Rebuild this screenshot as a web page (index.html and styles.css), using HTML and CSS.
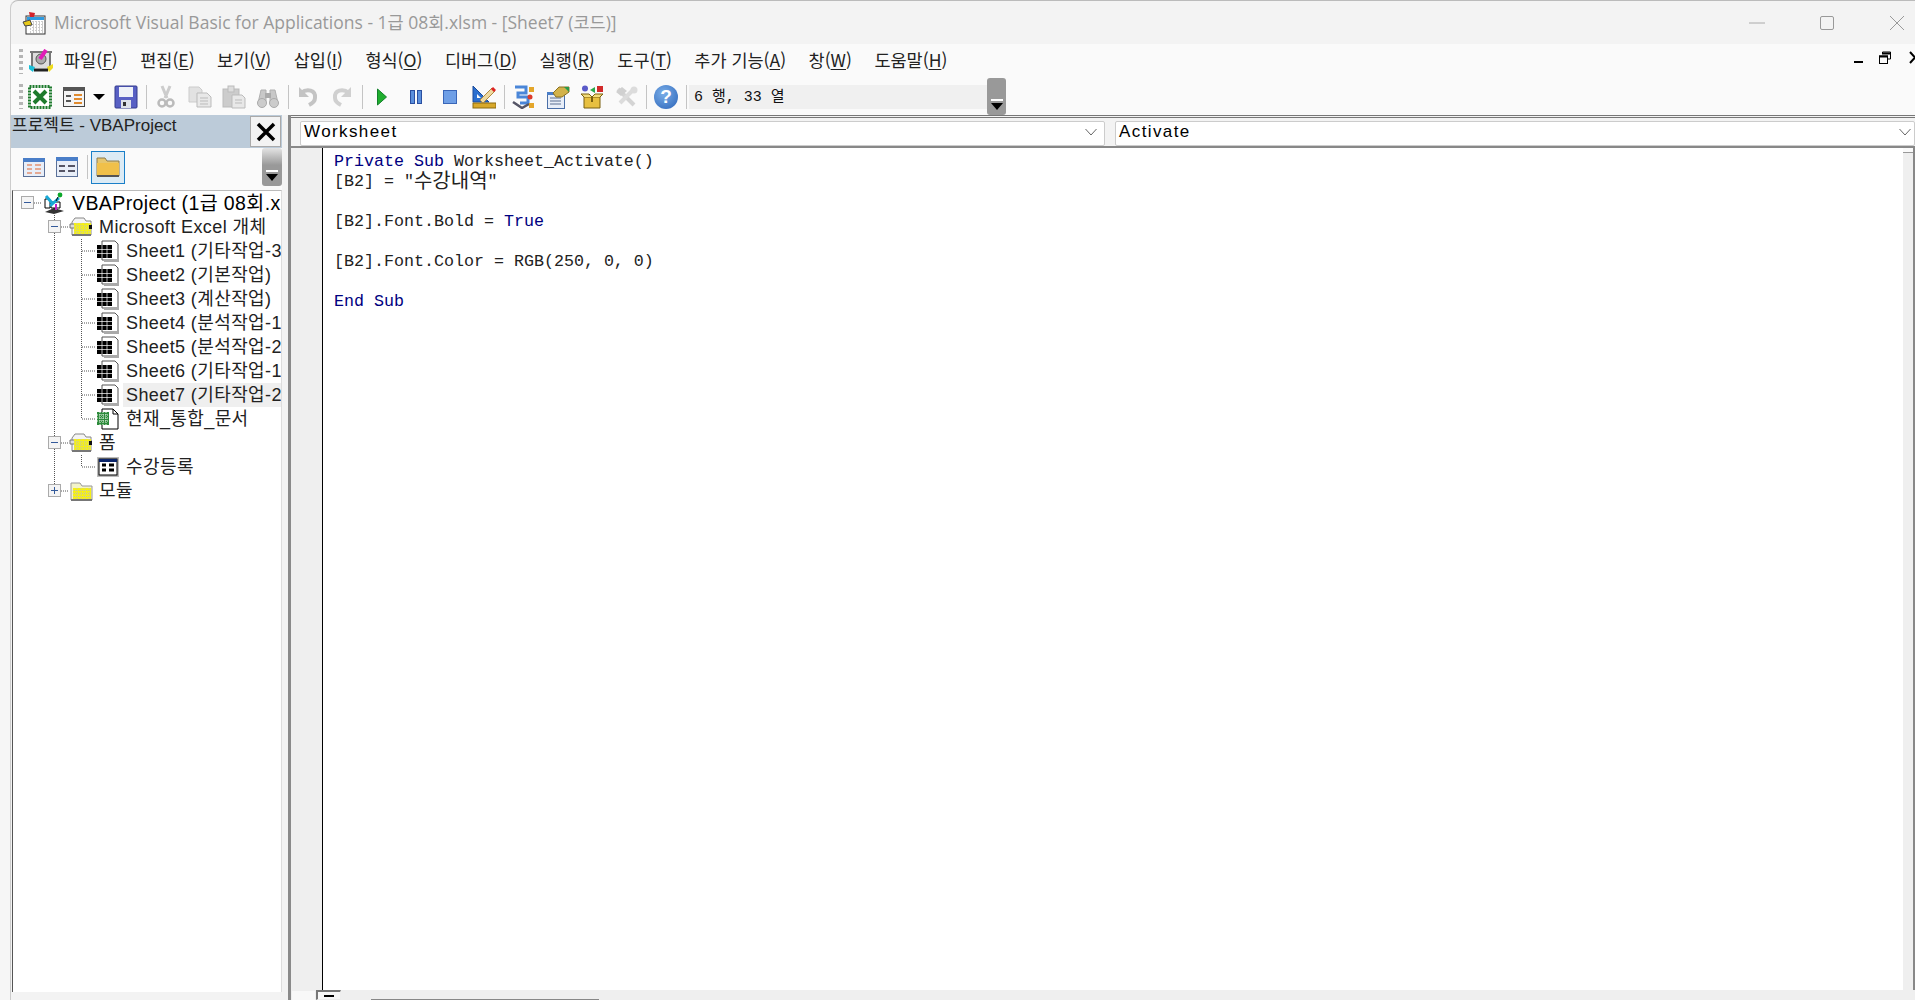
FILE: index.html
```html
<!DOCTYPE html>
<html lang="ko">
<head>
    <meta charset="UTF-8">
    <title>Microsoft Visual Basic for Applications</title>
    <link rel="stylesheet" href="styles.css">
</head>
<body>
<svg class="defs" width="0" height="0">
    <symbol id="t-branch" viewBox="0 0 27 24"><path d="M13.5 0V24M14 12H27" fill="none" stroke="#555" stroke-dasharray="1 1"/></symbol>
    <symbol id="l-branch" viewBox="0 0 27 24"><path d="M13.5 0V12M14 12H27" fill="none" stroke="#555" stroke-dasharray="1 1"/></symbol>
    <symbol id="v-line" viewBox="0 0 27 24"><path d="M13.5 0V24" fill="none" stroke="#555" stroke-dasharray="1 1"/></symbol>
    <symbol id="box-minus" viewBox="0 0 27 24"><path d="M13.5 0V24M20 12H27" fill="none" stroke="#555" stroke-dasharray="1 1"/><rect x="7.5" y="5.5" width="12" height="12" fill="#f4f4f4" stroke="#aaa"/><path d="M10 11.5H17" stroke="#345a9a"/></symbol>
    <symbol id="box-minus-end" viewBox="0 0 27 24"><path d="M20 12H27" fill="none" stroke="#555" stroke-dasharray="1 1"/><rect x="7.5" y="5.5" width="12" height="12" fill="#f4f4f4" stroke="#aaa"/><path d="M10 11.5H17" stroke="#345a9a"/></symbol>
    <symbol id="box-plus" viewBox="0 0 27 24"><path d="M13.5 0V6M20 12H27" fill="none" stroke="#555" stroke-dasharray="1 1"/><rect x="7.5" y="5.5" width="12" height="12" fill="#f4f4f4" stroke="#aaa"/><path d="M10 11.5H17M13.5 8V15" stroke="#345a9a"/></symbol>
    <symbol id="sheet" viewBox="0 0 24 22"><path d="M6 1H19L22 4V20H6Z" fill="#fff" stroke="#555"/><path d="M22 5V21H8" fill="none" stroke="#aaa" stroke-width="2"/><rect x="1" y="5" width="15" height="13" fill="#000"/><path d="M1 9.5H16M1 13.5H16M6 5V18M11 5V18" stroke="#fff" stroke-width="0.7"/></symbol>
    <symbol id="folder-open" viewBox="0 0 24 22"><path d="M3 6L6 2H15L17 5H22V19H3Z" fill="#f4f4f4" stroke="#888"/><path d="M1 8H22V12H1Z" fill="#ddd" stroke="#777"/><rect x="5" y="7" width="17" height="11" fill="#f5f016"/><path d="M5 10H22M5 13H22M5 16H22M8 7V18M12 7V18M16 7V18M20 7V18" stroke="#c9c9a0" stroke-dasharray="1 1"/><path d="M3 19H22" stroke="#777" stroke-width="2"/><rect x="20" y="9" width="3" height="4" fill="#111"/></symbol>
    <symbol id="folder-closed" viewBox="0 0 24 22"><path d="M2 6V3H11L13 6H23V20H2Z" fill="#f3f3c8" stroke="#999"/><rect x="4" y="8" width="18" height="11" fill="#f5f016"/><path d="M4 10.5H22M4 13.5H22M4 16.5H22M8 8V19M12 8V19M16 8V19M20 8V19" stroke="#c9c9a0" stroke-dasharray="1 1"/><path d="M2 20H23" stroke="#777" stroke-width="2"/></symbol>
    <symbol id="doc-excel" viewBox="0 0 24 22"><path d="M6 1H17L22 6V21H6Z" fill="#fff" stroke="#000"/><path d="M17 1V6H22" fill="none" stroke="#000"/><rect x="1" y="4" width="12" height="13" fill="#2c8a3a"/><path d="M1 7H13M1 10H13M1 13H13M4 4V17M7 4V17M10 4V17" stroke="#e8f4e8" stroke-dasharray="1 1"/></symbol>
    <symbol id="form" viewBox="0 0 24 22"><rect x="1" y="1" width="22" height="20" fill="#bbb"/><rect x="3" y="3" width="18" height="16" fill="#fff" stroke="#000"/><rect x="3" y="3" width="18" height="3" fill="#0a246a"/><path d="M6 9H10M6 14H10M13 9H18M13 14H18" stroke="#000" stroke-width="3"/></symbol>
    <symbol id="vbaproject" viewBox="0 0 24 22"><path d="M3 20L12 22L22 19L12 16Z" fill="#333"/><path d="M3 7H8V16H3ZM9 10H18V16H9Z" fill="#fff" stroke="#000"/><path d="M4 4L11 12M17 6L8 14" stroke="#19a9d6" stroke-width="3"/><rect x="13" y="12" width="2" height="6" fill="#c21fc2"/><circle cx="18" cy="3" r="2.4" fill="#0ca82a"/><path d="M14 9L16 5" stroke="#000"/></symbol>
</svg>

<div class="window">
    <div class="titlebar">
        <svg class="app-icon" viewBox="0 0 24 24">
            <rect x="4" y="5" width="19" height="18" fill="#fff" stroke="#333"/>
            <rect x="5" y="6" width="17" height="3" fill="#2f9be0"/>
            <path d="M8 12H21M8 15H21M8 18H21M8 21H21M11 10V22M14 10V22M17 10V22M20 10V22" stroke="#999" stroke-dasharray="1 2"/>
            <path d="M7 1L13 2L12 6H8Z" fill="#d3232a"/>
            <path d="M1 11L8 9L10 14L3 15Z" fill="#e8c918" stroke="#444"/>
        </svg>
        <span class="title-text">Microsoft Visual Basic for Applications - 1급 08회.xlsm - [Sheet7 (코드)]</span>
        <div class="caption-btns">
            <svg class="cap" viewBox="0 0 16 16"><path d="M0 8H16" stroke="#aaa"/></svg>
            <svg class="cap" viewBox="0 0 16 16"><rect x="1.5" y="1.5" width="13" height="13" rx="1.5" fill="none" stroke="#999"/></svg>
            <svg class="cap" viewBox="0 0 16 16"><path d="M1 1L15 15M15 1L1 15" stroke="#999"/></svg>
        </div>
    </div>

    <div class="menubar">
        <span class="gripper"></span>
        <svg class="menu-icon" viewBox="0 0 26 24">
            <rect x="2" y="2" width="22" height="2" fill="#777"/>
            <rect x="3" y="3" width="3" height="17" fill="#777"/>
            <rect x="20" y="3" width="3" height="17" fill="#777"/>
            <rect x="5" y="4" width="16" height="15" fill="#ddd"/>
            <circle cx="13" cy="10" r="5" fill="#aaa" stroke="#555"/>
            <path d="M12 10L18 1" stroke="#e21bb8" stroke-width="4"/>
            <path d="M1 16L7 18L5 23L1 20Z" fill="#1ac0d8"/>
            <path d="M25 15L19 18L21 23L25 19Z" fill="#eedc1e"/>
            <path d="M6 21H20" stroke="#222" stroke-width="3"/>
        </svg>
        <nav class="menu">
            <span>파일(<u>F</u>)</span>
            <span>편집(<u>E</u>)</span>
            <span>보기(<u>V</u>)</span>
            <span>삽입(<u>I</u>)</span>
            <span>형식(<u>O</u>)</span>
            <span>디버그(<u>D</u>)</span>
            <span>실행(<u>R</u>)</span>
            <span>도구(<u>T</u>)</span>
            <span>추가 기능(<u>A</u>)</span>
            <span>창(<u>W</u>)</span>
            <span>도움말(<u>H</u>)</span>
        </nav>
        <div class="mdi-btns">
            <svg class="mdi" viewBox="0 0 14 14"><path d="M1 11H10" stroke="#000" stroke-width="2"/></svg>
            <svg class="mdi" viewBox="0 0 14 14"><path d="M4.5 3V1H12.5V8H10" fill="none" stroke="#000"/><path d="M4 2.5H12" stroke="#000" stroke-width="2"/><rect x="1.5" y="5" width="8" height="7.500" fill="none" stroke="#000"/><path d="M1 5.500H10" stroke="#000" stroke-width="2"/></svg>
            <svg class="mdi mdi-close" viewBox="0 0 14 14"><path d="M1 1L11 12M11 1L1 12" stroke="#000" stroke-width="2"/></svg>
        </div>
    </div>

    <div class="toolbar">
        <span class="gripper"></span>
        <span class="tb"><svg viewBox="0 0 24 24"><rect x="1.500" y="1.500" width="21" height="21" fill="#fff" stroke="#1d7a2c" stroke-width="3" stroke-dasharray="2 1"/><path d="M6 6L18 18M18 6L6 18" stroke="#1d7a2c" stroke-width="4"/></svg></span>
        <span class="tb"><svg viewBox="0 0 24 24"><rect x="1.500" y="2.500" width="21" height="19" fill="#f4f4f4" stroke="#444"/><rect x="1" y="2" width="22" height="4" fill="#555"/><path d="M4 11H9M4 16H9" stroke="#555" stroke-width="2"/><path d="M12 10H20M12 14H20M12 18H20" stroke="#e08a2e" stroke-width="2"/></svg></span>
        <span class="tb-arrow"></span>
        <span class="tb save"><svg viewBox="0 0 24 24"><rect x="1" y="1" width="22" height="22" rx="1" fill="#5860c4" stroke="#333a8c"/><rect x="5" y="2" width="14" height="10" fill="#eef1f8"/><rect x="7" y="15" width="10" height="8" fill="#dfe2ea"/><rect x="9" y="17" width="3" height="4" fill="#333"/></svg></span>
        <span class="sep"></span>
        <span class="tb off"><svg viewBox="0 0 24 24"><path d="M8 1L13 13M16 1L11 13" stroke="#ccc" stroke-width="3"/><circle cx="8" cy="18" r="3.500" fill="none" stroke="#bbb" stroke-width="2.500"/><circle cx="16" cy="18" r="3.500" fill="none" stroke="#bbb" stroke-width="2.500"/></svg></span>
        <span class="tb off"><svg viewBox="0 0 24 24"><path d="M1 2H11L14 5V17H1Z" fill="#e2e2e2" stroke="#ccc"/><path d="M9 8H19L23 12V22H9Z" fill="#e8e8e8" stroke="#bbb"/><path d="M12 13H20M12 16H20M12 19H20" stroke="#bbb"/></svg></span>
        <span class="tb off"><svg viewBox="0 0 24 24"><rect x="1" y="4" width="16" height="18" fill="#ccc" stroke="#bbb"/><rect x="6" y="1" width="6" height="6" fill="#ddd" stroke="#bbb"/><path d="M10 10H20L23 13V23H10Z" fill="#e8e8e8" stroke="#bbb"/><path d="M13 15H20M13 18H20" stroke="#bbb"/></svg></span>
        <span class="tb off"><svg viewBox="0 0 24 24"><path d="M2 18L5 5H10V18ZM14 18V5H19L22 18Z" fill="#c8c8c8" stroke="#b0b0b0"/><rect x="9" y="8" width="6" height="5" fill="#aaa"/><circle cx="6" cy="18" r="4.500" fill="#ccc" stroke="#aaa"/><circle cx="18" cy="18" r="4.500" fill="#ccc" stroke="#aaa"/></svg></span>
        <span class="sep"></span>
        <span class="tb off"><svg viewBox="0 0 24 24"><path d="M5 8C11 3 20 5 19 13C19 17 15 19 13 20" fill="none" stroke="#c4c4c4" stroke-width="4"/><path d="M3 2V12H13Z" fill="#c4c4c4"/></svg></span>
        <span class="tb off"><svg viewBox="0 0 24 24"><path d="M19 8C13 3 4 5 5 13C5 17 9 19 11 20" fill="none" stroke="#d0d0d0" stroke-width="4"/><path d="M21 2V12H11Z" fill="#d0d0d0"/></svg></span>
        <span class="sep"></span>
        <span class="tb"><svg viewBox="0 0 24 24"><path d="M7.500 4L16.500 12L7.500 20Z" fill="#1fae2e" stroke="#12802a"/></svg></span>
        <span class="tb"><svg viewBox="0 0 24 24"><rect x="6.500" y="5.500" width="4" height="13" fill="#5b8fdc" stroke="#2a4fa0"/><rect x="13.500" y="5.500" width="4" height="13" fill="#5b8fdc" stroke="#2a4fa0"/></svg></span>
        <span class="tb"><svg viewBox="0 0 24 24"><rect x="5.500" y="5.500" width="13" height="13" fill="#6f9fe6" stroke="#3a66b8"/></svg></span>
        <span class="tb"><svg viewBox="0 0 24 24"><path d="M1 1V17H17Z" fill="#2a6fd0" stroke="#1a4a9a"/><path d="M5 9V13H9Z" fill="#fafafa"/><rect x="1" y="18" width="23" height="5" fill="#d8a82a" stroke="#8a6a10"/><path d="M8 15L20 3L23 6L11 18Z" fill="#eed9a0" stroke="#b08a40"/><path d="M20 3L23 6" stroke="#d22" stroke-width="3"/></svg></span>
        <span class="sep"></span>
        <span class="tb"><svg viewBox="0 0 24 24"><path d="M3 2H14V8H6V12H16V18H8" fill="none" stroke="#4a86d8" stroke-width="3"/><path d="M1 17L10 23L17 19" fill="none" stroke="#556" stroke-width="2.500"/><rect x="17" y="2" width="5" height="5" fill="#e4a62a"/><circle cx="18" cy="12" r="2.500" fill="#dd3a2a"/><rect x="17" y="18" width="5" height="5" fill="#e4a62a"/></svg></span>
        <span class="tb"><svg viewBox="0 0 24 24"><rect x="1.500" y="7.500" width="17" height="16" fill="#e8eef8" stroke="#4a6fa8"/><rect x="1" y="7" width="18" height="3" fill="#4a7ec8"/><path d="M4 13H15M4 16H15M4 19H15" stroke="#5a6f90"/><path d="M7 8L13 2H23V7L16 12H10Z" fill="#d2b24a" stroke="#8a7020"/><path d="M18 2H23V7Z" fill="#2a9a4a"/></svg></span>
        <span class="tb"><svg viewBox="0 0 24 24"><path d="M4 12H20V23H4Z" fill="#e8c040" stroke="#7a6010"/><path d="M4 12L1 9H9L12 12L15 9H23L20 12" fill="#f3dc7a" stroke="#7a6010"/><rect x="11" y="12" width="2" height="5" fill="#7a6010"/><circle cx="5" cy="3.500" r="3" fill="#5a5ac8"/><path d="M10 5L15 2V8Z" fill="#2aa84a"/><rect x="17" y="1" width="6" height="6" fill="#d22a2a"/></svg></span>
        <span class="tb off"><svg viewBox="0 0 24 24"><path d="M4 4L20 20" stroke="#d4d4d4" stroke-width="4"/><path d="M20 4L6 18" stroke="#dcdcdc" stroke-width="4"/><path d="M2 7L8 2L13 6L7 11Z" fill="#d0d0d0"/><circle cx="20" cy="5" r="3.500" fill="#dcdcdc"/></svg></span>
        <span class="sep"></span>
        <span class="tb"><span class="help">?</span></span>
        <span class="sep"></span>
        <span class="status">6 행, 33 열</span>
        <span class="overflow tb-overflow"><span class="chev"></span></span>
    </div>

    <div class="main">
        <div class="project">
            <div class="project-title">
                <span class="project-name">프로젝트 - VBAProject</span>
                <span class="project-close">
                    <svg viewBox="0 0 20 20"><path d="M2 2L18 18M18 2L2 18" stroke="#000" stroke-width="3.500"/></svg>
                </span>
            </div>
            <div class="project-tools">
                <svg class="pt-icon" viewBox="0 0 22 20"><rect x="0.500" y="1.500" width="21" height="18" fill="#e8eef8" stroke="#5a7098"/><rect x="0" y="1" width="22" height="4" fill="#4a7ec8"/><path d="M4 8H9M4 12H9M4 16H9M12 8H18M12 12H18M12 16H18" stroke="#e0642e"/></svg>
                <svg class="pt-icon" viewBox="0 0 22 20"><rect x="0.500" y="0.500" width="21" height="19" fill="#e8eef8" stroke="#5a7098"/><rect x="0" y="0" width="22" height="4" fill="#4a7ec8"/><path d="M3 9H9M3 14H9M12 9H19M12 14H19" stroke="#556" stroke-width="2"/></svg>
                <span class="pt-sep"></span>
                <span class="pt-active">
                    <svg viewBox="0 0 24 20"><path d="M1 19V1H9L11 4H23V19Z" fill="#e6c66e" stroke="#8a7a50"/><rect x="1" y="6" width="22" height="13" fill="#f0c04a"/><path d="M1 19H23" stroke="#555" stroke-width="2"/></svg>
                </span>
                <span class="overflow pt-overflow"><span class="chev"></span></span>
            </div>
            <div class="tree">
                <div class="row"><svg class="cell"><use href="#box-minus-end"/></svg><svg class="node root-icon"><use href="#vbaproject"/></svg><span class="label root-label">VBAProject (1급 08회.xlsm)</span></div>
                <div class="row"><span class="cell"></span><svg class="cell"><use href="#box-minus"/></svg><svg class="node"><use href="#folder-open"/></svg><span class="label">Microsoft Excel 개체</span></div>
                <div class="row"><span class="cell"></span><svg class="cell"><use href="#v-line"/></svg><svg class="cell"><use href="#t-branch"/></svg><svg class="node"><use href="#sheet"/></svg><span class="label">Sheet1 (기타작업-3)</span></div>
                <div class="row"><span class="cell"></span><svg class="cell"><use href="#v-line"/></svg><svg class="cell"><use href="#t-branch"/></svg><svg class="node"><use href="#sheet"/></svg><span class="label">Sheet2 (기본작업)</span></div>
                <div class="row"><span class="cell"></span><svg class="cell"><use href="#v-line"/></svg><svg class="cell"><use href="#t-branch"/></svg><svg class="node"><use href="#sheet"/></svg><span class="label">Sheet3 (계산작업)</span></div>
                <div class="row"><span class="cell"></span><svg class="cell"><use href="#v-line"/></svg><svg class="cell"><use href="#t-branch"/></svg><svg class="node"><use href="#sheet"/></svg><span class="label">Sheet4 (분석작업-1)</span></div>
                <div class="row"><span class="cell"></span><svg class="cell"><use href="#v-line"/></svg><svg class="cell"><use href="#t-branch"/></svg><svg class="node"><use href="#sheet"/></svg><span class="label">Sheet5 (분석작업-2)</span></div>
                <div class="row"><span class="cell"></span><svg class="cell"><use href="#v-line"/></svg><svg class="cell"><use href="#t-branch"/></svg><svg class="node"><use href="#sheet"/></svg><span class="label">Sheet6 (기타작업-1)</span></div>
                <div class="row"><span class="cell"></span><svg class="cell"><use href="#v-line"/></svg><svg class="cell"><use href="#t-branch"/></svg><svg class="node"><use href="#sheet"/></svg><span class="label selected">Sheet7 (기타작업-2)</span></div>
                <div class="row"><span class="cell"></span><svg class="cell"><use href="#v-line"/></svg><svg class="cell"><use href="#l-branch"/></svg><svg class="node"><use href="#doc-excel"/></svg><span class="label">현재_통합_문서</span></div>
                <div class="row"><span class="cell"></span><svg class="cell"><use href="#box-minus"/></svg><svg class="node"><use href="#folder-open"/></svg><span class="label">폼</span></div>
                <div class="row"><span class="cell"></span><svg class="cell"><use href="#v-line"/></svg><svg class="cell"><use href="#l-branch"/></svg><svg class="node"><use href="#form"/></svg><span class="label">수강등록</span></div>
                <div class="row"><span class="cell"></span><svg class="cell"><use href="#box-plus"/></svg><svg class="node"><use href="#folder-closed"/></svg><span class="label">모듈</span></div>
            </div>
        </div>

        <div class="code-pane">
            <div class="combos">
                <div class="combo combo-object">Worksheet<svg class="combo-chev" viewBox="0 0 12 8"><path d="M0.500 1L6 7L11.500 1" fill="none" stroke="#666"/></svg></div>
                <div class="combo combo-proc">Activate<svg class="combo-chev" viewBox="0 0 12 8"><path d="M0.500 1L6 7L11.500 1" fill="none" stroke="#666"/></svg></div>
            </div>
            <div class="editor">
                <div class="gutter"></div>
                <pre class="code"><span class="kw">Private Sub</span> Worksheet_Activate()
[B2] = "<span class="ko">수강내역</span>"

[B2].Font.Bold = <span class="kw">True</span>

[B2].Font.Color = RGB(250, 0, 0)

<span class="kw">End Sub</span></pre>
                <div class="vscroll"><span class="vscroll-btn"></span></div>
            </div>
            <div class="hscroll">
                <span class="split-btn"><span class="mark-a"></span></span>
                <span class="split-btn pressed"><span class="mark-b"></span></span>
                <span class="hthumb"></span>
            </div>
        </div>
    </div>
</div>
</body>
</html>
```

FILE: styles.css
```css
* {
    box-sizing: border-box;
}
html, body {
    margin: 0;
    height: 100%;
    overflow: hidden;
}
body {
    background-color: #f6f6f6;
    font-family: "Noto Sans CJK KR", "Liberation Sans", sans-serif;
    color: #111;
}
.defs {
    display: block;
    height: 0;
}
.window {
    margin-left: 10px;
    height: 1000px;
    display: flex;
    flex-direction: column;
    border-top: 1px solid #bbb;
    border-left: 1px solid #ccc;
    border-top-left-radius: 8px;
    overflow: hidden;
    background-color: #f3f3f3;
}

/* title bar */
.titlebar {
    height: 43px;
    flex: none;
    display: flex;
    align-items: center;
    padding-left: 11px;
}
.app-icon {
    width: 24px;
    height: 24px;
    margin-right: 8px;
}
.title-text {
    font-family: "Open Sans", "Noto Sans CJK KR", sans-serif;
    font-size: 17.500px;
    color: #999;
    padding-bottom: 2px;
}
.caption-btns {
    margin-left: auto;
    display: flex;
    gap: 54px;
    padding-right: 10px;
}
.cap {
    width: 16px;
    height: 16px;
}

/* menu bar */
.menubar {
    height: 34px;
    flex: none;
    display: flex;
    align-items: center;
    background-color: #fafafa;
    padding-left: 8px;
}
.gripper {
    width: 4px;
    height: 25px;
    flex: none;
    background: repeating-linear-gradient(#b5b5b5 0 3px, transparent 3px 6px);
}
.menu-icon {
    width: 26px;
    height: 24px;
    margin-left: 5px;
    flex: none;
}
.menu {
    display: flex;
    gap: 22.500px;
    margin-left: 10px;
    padding-bottom: 4px;
    font-size: 17.500px;
    color: #222;
}
.menu u {
    text-underline-offset: 2px;
}
.mdi-btns {
    margin-left: auto;
    display: flex;
    gap: 11px;
    margin-right: -8px;
    padding-bottom: 6px;
}
.mdi {
    width: 14px;
    height: 14px;
}
.mdi-close {
    margin-left: 6px;
}

/* standard toolbar */
.toolbar {
    height: 37px;
    flex: none;
    display: flex;
    align-items: center;
    background-color: #fafafa;
    padding-left: 8px;
}
.tb {
    width: 34px;
    height: 24px;
    flex: none;
    display: flex;
    justify-content: center;
}
.tb svg {
    width: 24px;
    height: 24px;
}
.tb-arrow {
    width: 16px;
    height: 24px;
    flex: none;
    display: flex;
    align-items: center;
    justify-content: center;
}
.tb-arrow::before {
    content: "";
    border-left: 6px solid transparent;
    border-right: 6px solid transparent;
    border-top: 6px solid #000;
}
.save {
    margin-left: 2px;
}
.sep {
    width: 6px;
    height: 24px;
    flex: none;
    background: linear-gradient(#c4c4c4, #c4c4c4) center / 1px 100% no-repeat;
}
.help {
    width: 24px;
    height: 24px;
    border-radius: 50%;
    background: radial-gradient(circle at 40% 35%, #7aaee8, #2a63b8);
    color: #fff;
    font-family: "Liberation Sans", sans-serif;
    font-weight: bold;
    font-size: 19px;
    line-height: 24px;
    text-align: center;
}
.status {
    width: 298px;
    height: 24px;
    flex: none;
    background-color: #f0f0f0;
    padding-left: 5px;
    font-family: "Liberation Mono", "Noto Sans CJK KR", monospace;
    font-size: 15px;
    line-height: 26px;
}
.overflow {
    flex: none;
    background-color: #999;
    border-radius: 3px;
    display: flex;
    align-items: flex-end;
    justify-content: center;
}
.tb-overflow {
    width: 19px;
    height: 37px;
}
.chev {
    width: 12px;
    height: 12px;
    margin-bottom: 4px;
    border-top: 2px solid #fff;
    position: relative;
}
.chev::after {
    content: "";
    position: absolute;
    left: 0;
    top: 2px;
    border-left: 6px solid transparent;
    border-right: 6px solid transparent;
    border-top: 7px solid #000;
}

/* main area */
.main {
    flex: 1;
    min-height: 0;
    display: flex;
}
.project {
    width: 271px;
    flex: none;
    display: flex;
    flex-direction: column;
}
.project-title {
    height: 33px;
    flex: none;
    display: flex;
    justify-content: space-between;
    align-items: flex-start;
    background-color: #bccbd9;
    font-family: "Liberation Sans", "Noto Sans CJK KR", sans-serif;
    font-size: 17px;
    line-height: 22px;
    color: #222;
}
.project-name {
    padding-left: 1px;
}
.project-close {
    width: 31px;
    height: 31px;
    margin: 1px 1px 0 0;
    background-color: #f3f3f3;
    border: 1px solid #aaa;
    display: flex;
    align-items: center;
    justify-content: center;
}
.project-close svg {
    width: 20px;
    height: 20px;
}
.project-tools {
    height: 42px;
    flex: none;
    display: flex;
    align-items: center;
    background-color: #fafafa;
    padding: 0 0 4px 12px;
}
.pt-icon {
    width: 22px;
    height: 20px;
    margin-right: 11px;
}
.pt-sep {
    width: 1px;
    height: 24px;
    background-color: #c4c4c4;
    margin-left: -2px;
}
.pt-active {
    width: 34px;
    height: 33px;
    margin-left: 3px;
    background-color: #dcebf5;
    border: 1px solid #1a7fc8;
    display: flex;
    align-items: center;
    justify-content: center;
}
.pt-active svg {
    width: 24px;
    height: 20px;
}
.pt-overflow {
    width: 20px;
    height: 38px;
    margin-left: auto;
    background: linear-gradient(#e4e4e4, #999 45%);
}

/* project tree */
.tree {
    height: 802px;
    flex: none;
    margin-left: 1px;
    padding: 0 0 0 1px;
    background-color: #fff;
    border-left: 1px solid #555;
    border-top: 1px solid #bbb;
    border-right: 1px solid #ddd;
    overflow: hidden;
    font-family: "Liberation Sans", "Noto Sans CJK KR", sans-serif;
    font-size: 18px;
    letter-spacing: 0.4px;
    color: #222;
}
.row {
    height: 24px;
    display: flex;
    align-items: center;
    white-space: nowrap;
}
.cell {
    width: 27px;
    height: 24px;
    flex: none;
}
.node {
    width: 24px;
    height: 22px;
    flex: none;
    margin-left: 1px;
}
.root-icon {
    margin-left: 1px;
}
.label {
    height: 24px;
    line-height: 24px;
    margin-left: 3px;
    padding: 0 3px;
    flex: 1;
    overflow: hidden;
}
.root-label {
    font-size: 19.500px;
    color: #000;
}
.selected {
    background-color: #efefef;
}

/* code pane */
.code-pane {
    flex: 1;
    min-width: 0;
    display: flex;
    flex-direction: column;
    margin-left: 6px;
    border-left: 3px solid #8a8a8a;
}
.combos {
    height: 33px;
    flex: none;
    display: flex;
    gap: 10px;
    padding: 3px 0 0 9px;
    background-color: #f3f3f3;
    border-top: 3px double #777;
    border-bottom: 2px solid #888;
}
.combo {
    display: flex;
    align-items: center;
    justify-content: space-between;
    background-color: #fff;
    padding: 0 3px 3px 3px;
    font-family: "Liberation Sans", sans-serif;
    font-size: 17px;
    letter-spacing: 1.400px;
    color: #000;
    border: 1px solid #ccc;
    border-radius: 2px;
}
.combo-object {
    width: 805px;
    padding-right: 7px;
}
.combo-proc {
    flex: 1;
}
.combo-chev {
    width: 12px;
    height: 8px;
}
.editor {
    flex: 1;
    min-height: 0;
    display: flex;
    background-color: #fff;
}
.gutter {
    width: 32px;
    flex: none;
    background-color: #efefef;
    border-right: 1px solid #000;
}
.code {
    flex: 1;
    margin: 0;
    padding: 4px 0 0 11px;
    font-family: "Liberation Mono", "Noto Sans CJK KR", monospace;
    font-size: 16.670px;
    line-height: 20px;
    color: #222;
}
.kw {
    color: #000080;
}
.ko {
    font-family: "Noto Sans CJK KR", sans-serif;
    font-size: 20px;
    line-height: 0;
    vertical-align: -2px;
}
.vscroll {
    width: 12px;
    flex: none;
    background-color: #efefef;
    border-right: 2px solid #888;
}
.vscroll-btn {
    display: block;
    height: 5px;
    background-color: #fafafa;
    border-bottom: 1px solid #999;
}
.hscroll {
    height: 10px;
    flex: none;
    display: flex;
    background-color: #efefef;
    position: relative;
}
.split-btn {
    width: 25px;
    height: 10px;
    flex: none;
    background-color: #f8f8f8;
    border: 1px solid #eee;
    display: flex;
    justify-content: center;
    padding-top: 9px;
}
.pressed {
    border-top: 2px solid #777;
    border-left: 2px solid #777;
    padding-top: 3px;
}
.mark-a {
    width: 7px;
    height: 1px;
    background-color: #000;
}
.mark-b {
    width: 10px;
    height: 2px;
    background-color: #000;
}
.hthumb {
    position: absolute;
    left: 80px;
    bottom: 0;
    width: 228px;
    height: 1px;
    background-color: #888;
}
```
